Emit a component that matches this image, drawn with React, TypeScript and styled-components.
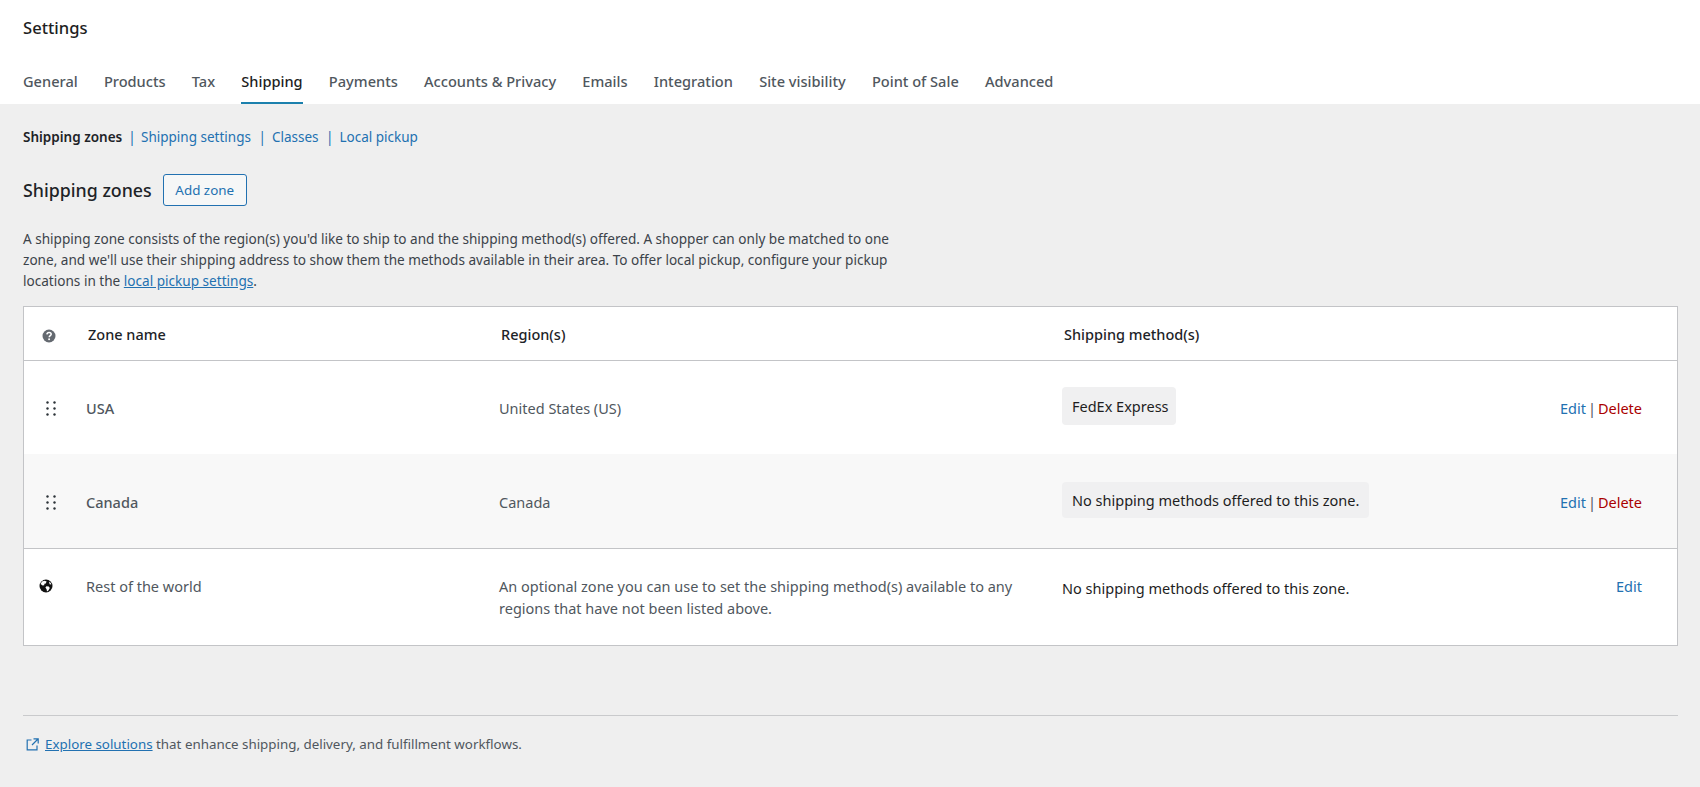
import React from "react";
import styled, { createGlobalStyle } from "styled-components";

const Global = createGlobalStyle`
  html, body { margin: 0; padding: 0; background: #efefef; }
  body { font-family: "Noto Sans", "Open Sans", sans-serif; color: #3c434a; font-size: 14.5px; }
  * { box-sizing: border-box; }
`;

const Page = styled.div`
  min-height: 787px;
  display: flex;
  flex-direction: column;
`;

const Header = styled.header`
  background: #fff;
  height: 104px;
  padding: 0 23px;
  display: flex;
  flex-direction: column;
`;

const Title = styled.h1`
  margin: 0;
  height: 56px;
  line-height: 56px;
  font-size: 16.6px;
  font-weight: 500;
  color: #1e1e1e;
`;

const Tabs = styled.nav`
  display: flex;
  gap: 26.2px;
  height: 48px;
`;

const Tab = styled.a<{ $active?: boolean }>`
  display: flex;
  align-items: center;
  height: 48px;
  padding-top: 3px;
  font-size: 14.6px;
  font-weight: 500;
  color: ${(p) => (p.$active ? "#1e1e1e" : "#50575e")};
  border-bottom: 2px solid ${(p) => (p.$active ? "#1b80ad" : "transparent")};
`;

const Content = styled.main`
  padding: 0 22px 0 23px;
  display: flex;
  flex-direction: column;
`;

const SubNav = styled.div`
  display: flex;
  align-items: center;
  height: 22px;
  margin-top: 22px;
  font-size: 13.5px;
`;

const SubCurrent = styled.span`
  font-weight: 600;
  color: #1d2327;
`;

const SubLink = styled.a`
  color: #2271b1;
`;

const SubSep = styled.span<{ $first?: boolean }>`
  color: #2271b1;
  margin: 0 ${(p) => (p.$first ? "5.4px" : "6px")} 0 ${(p) => (p.$first ? "6px" : "7.5px")};
`;

const Heading = styled.div`
  display: flex;
  align-items: center;
  gap: 11px;
  margin-top: 26px;
  height: 32px;
`;

const H2 = styled.h2`
  margin: 0;
  font-size: 17.8px;
  font-weight: 500;
  color: #1d2327;
`;

const AddButton = styled.button`
  width: 84px;
  height: 32px;
  padding: 0;
  background: #f6f7f7;
  border: 1px solid #2271b1;
  border-radius: 3px;
  color: #2271b1;
  font: inherit;
  font-size: 13.4px;
`;

const Intro = styled.p`
  margin: 22px 0 15px;
  width: 880px;
  font-size: 13.58px;
  line-height: 21px;
`;

const TextLink = styled.a`
  color: #2271b1;
  text-decoration: underline;
`;

const Table = styled.section`
  background: #fff;
  border: 1px solid #c3c4c7;
  display: flex;
  flex-direction: column;
`;

const Row = styled.div<{ $height: number; $alt?: boolean; $line?: boolean; $top?: boolean; $shift?: number }>`
  display: grid;
  grid-template-columns: 62px 413px 563px 1fr auto;
  height: ${(p) => p.$height}px;
  align-items: ${(p) => (p.$top ? "start" : "center")};
  background: ${(p) => (p.$alt ? "#f8f8f8" : "transparent")};
  border-bottom: ${(p) => (p.$line ? "1px solid #c3c4c7" : "none")};
  padding-top: ${(p) => (p.$top ? "27px" : `${p.$shift ?? 0}px`)};
`;

const HeadCell = styled.div`
  font-size: 14.5px;
  font-weight: 500;
  color: #1d2327;
  padding-left: 2px;
`;

const IconCell = styled.div<{ $x: number; $y?: number }>`
  display: flex;
  padding-left: ${(p) => p.$x}px;
  padding-top: ${(p) => p.$y ?? 0}px;
`;

const NameCell = styled.div<{ $strong?: boolean }>`
  font-size: 14.5px;
  font-weight: ${(p) => (p.$strong ? 500 : 400)};
  color: #50575e;
`;

const RegionCell = styled.div<{ $lift?: boolean }>`
  font-size: 14.5px;
  line-height: 22px;
  color: #50575e;
  margin-top: ${(p) => (p.$lift ? "-1px" : "0")};
`;

const MethodCell = styled.div`
  display: flex;
  margin-top: -5px;
`;

const Chip = styled.span<{ $height: number; $right: number }>`
  display: flex;
  align-items: center;
  height: ${(p) => p.$height}px;
  padding: 0 ${(p) => p.$right}px 0 10px;
  background: #f0f0f1;
  border-radius: 4px;
  font-size: 14.5px;
  color: #1e1e1e;
`;

const PlainMethod = styled.span`
  font-size: 14.5px;
  color: #1e1e1e;
  padding-top: 2px;
`;

const Actions = styled.div`
  display: flex;
  justify-content: flex-end;
  gap: 2px;
  padding-right: 35px;
  font-size: 14.5px;
  color: #50575e;
`;

const EditLink = styled.a`
  color: #2271b1;
`;

const DeleteLink = styled.a`
  color: #a00;
`;

const Divider = styled.hr`
  margin: 69px 0 0;
  border: 0;
  border-top: 1px solid #c9cacc;
`;

const Footer = styled.div`
  display: flex;
  align-items: center;
  height: 20px;
  margin-top: 18px;
  padding-left: 3px;
  font-size: 13.35px;
  color: #50575e;
`;

const FooterIcon = styled.svg`
  width: 13px;
  height: 13px;
  margin-right: 6px;
  flex: none;
`;

const FooterText = styled.span`
  white-space: pre;
`;

const Drag = () => (
  <svg width="10" height="15" viewBox="0 0 10 15" fill="#2c3338">
    <circle cx="1.5" cy="1.5" r="1.2" />
    <circle cx="8.5" cy="1.5" r="1.2" />
    <circle cx="1.5" cy="7.5" r="1.2" />
    <circle cx="8.5" cy="7.5" r="1.2" />
    <circle cx="1.5" cy="13.5" r="1.2" />
    <circle cx="8.5" cy="13.5" r="1.2" />
  </svg>
);

const Help = () => (
  <svg width="14" height="14" viewBox="0 0 14 14">
    <circle cx="7" cy="7" r="6.5" fill="#646970" />
    <path d="M4.9 5.4C5 4.2 5.9 3.5 7.1 3.5 8.3 3.5 9.2 4.2 9.2 5.3 9.2 6.6 7.3 6.8 7.2 8.2" fill="none" stroke="#fff" strokeWidth="1.5" />
    <circle cx="7.1" cy="10.2" r="0.95" fill="#fff" />
  </svg>
);

const Globe = () => (
  <svg width="14" height="14" viewBox="0 0 14 14">
    <circle cx="7" cy="7" r="6.5" fill="#111" />
    <path d="M3 2.6 5.6 1.8 7.6 2.6 6.8 4.4 5.4 4.8 5.2 6.2 3.6 6.4 1.6 5ZM7.4 7.2 9.8 7.6 10.8 9 9.4 11.4 8 12.4 7.6 10.2 6.4 8.6ZM10 2.6 11.8 4 12.3 5.6 10.6 5.2Z" fill="#fff" />
  </svg>
);

const tabs = ["General", "Products", "Tax", "Shipping", "Payments", "Accounts & Privacy", "Emails", "Integration", "Site visibility", "Point of Sale", "Advanced"];

export default function App() {
  return (
    <Page>
      <Global />
      <Header>
        <Title>Settings</Title>
        <Tabs>
          {tabs.map((t) => (
            <Tab key={t} $active={t === "Shipping"}>{t}</Tab>
          ))}
        </Tabs>
      </Header>
      <Content>
        <SubNav>
          <SubCurrent>Shipping zones</SubCurrent>
          <SubSep $first>|</SubSep>
          <SubLink>Shipping settings</SubLink>
          <SubSep>|</SubSep>
          <SubLink>Classes</SubLink>
          <SubSep>|</SubSep>
          <SubLink>Local pickup</SubLink>
        </SubNav>
        <Heading>
          <H2>Shipping zones</H2>
          <AddButton>Add zone</AddButton>
        </Heading>
        <Intro>
          A shipping zone consists of the region(s) you'd like to ship to and the shipping method(s) offered. A shopper can only be matched to one zone, and we'll use their shipping address to show them the methods available in their area. To offer local pickup, configure your pickup locations in the <TextLink>local pickup settings</TextLink>.
        </Intro>
        <Table>
          <Row $height={54} $line>
            <IconCell $x={18} $y={5}><Help /></IconCell>
            <HeadCell>Zone name</HeadCell>
            <HeadCell>Region(s)</HeadCell>
            <HeadCell>Shipping method(s)</HeadCell>
          </Row>
          <Row $height={93} $shift={1}>
            <IconCell $x={22}><Drag /></IconCell>
            <NameCell $strong>USA</NameCell>
            <RegionCell>United States (US)</RegionCell>
            <MethodCell><Chip $height={38} $right={7}>FedEx Express</Chip></MethodCell>
            <Actions><EditLink>Edit</EditLink>|<DeleteLink>Delete</DeleteLink></Actions>
          </Row>
          <Row $height={95} $alt $line $shift={2}>
            <IconCell $x={22}><Drag /></IconCell>
            <NameCell $strong>Canada</NameCell>
            <RegionCell>Canada</RegionCell>
            <MethodCell><Chip $height={36} $right={10}>No shipping methods offered to this zone.</Chip></MethodCell>
            <Actions><EditLink>Edit</EditLink>|<DeleteLink>Delete</DeleteLink></Actions>
          </Row>
          <Row $height={96} $top>
            <IconCell $x={15} $y={3}><Globe /></IconCell>
            <NameCell>Rest of the world</NameCell>
            <RegionCell $lift>An optional zone you can use to set the shipping method(s) available to any regions that have not been listed above.</RegionCell>
            <PlainMethod>No shipping methods offered to this zone.</PlainMethod>
            <Actions><EditLink>Edit</EditLink></Actions>
          </Row>
        </Table>
        <Divider />
        <Footer>
          <FooterIcon viewBox="0 0 13 13" fill="none" stroke="#2271b1" strokeWidth="1.2">
            <path d="M5.5 2H1.2v9.8H11V7.5M7.5.8h4.7v4.7M12 1 6 7" />
          </FooterIcon>
          <TextLink>Explore solutions</TextLink>
          <FooterText> that enhance shipping, delivery, and fulfillment workflows.</FooterText>
        </Footer>
      </Content>
    </Page>
  );
}
